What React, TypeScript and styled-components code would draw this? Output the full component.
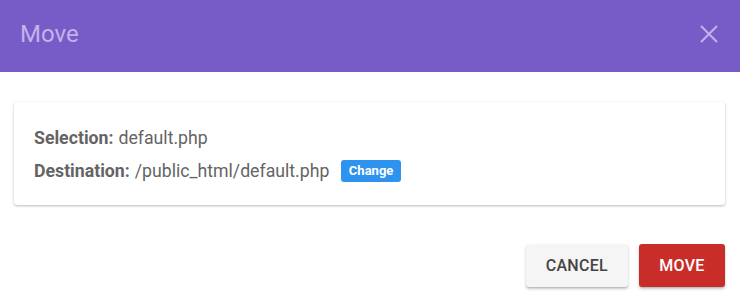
import React from "react";
import styled, { createGlobalStyle } from "styled-components";

const Global = createGlobalStyle`
  html, body { margin: 0; padding: 0; background: #ffffff; }
  body { font-family: Roboto, "Liberation Sans", Arial, sans-serif; }
  * { box-sizing: border-box; }
`;

const Dialog = styled.div`
  width: 740px;
  height: 305px;
  display: flex;
  flex-direction: column;
  background: #ffffff;
  overflow: hidden;
`;

const Header = styled.header`
  height: 72px;
  flex: none;
  display: flex;
  align-items: center;
  justify-content: space-between;
  padding: 0 21px 0 20px;
  background: #775bc7;
`;

const Title = styled.h1`
  margin: 0;
  font-size: 24px;
  font-weight: 400;
  line-height: 28px;
  color: #c2b3ea;
  padding-bottom: 4px;
`;

const CloseButton = styled.button`
  border: 0;
  background: transparent;
  padding: 0;
  width: 20px;
  height: 20px;
  display: flex;
  align-items: center;
  justify-content: center;
  cursor: pointer;
  margin-bottom: 4px;
`;

const Body = styled.div`
  flex: 1;
  display: flex;
  flex-direction: column;
  padding: 30px 15px 0 14px;
`;

const Card = styled.div`
  background: #ffffff;
  border-radius: 3px;
  box-shadow: 0 1px 3px rgba(0, 0, 0, 0.18), 0 1px 2px rgba(0, 0, 0, 0.1);
  padding: 19px 20px 18px;
  display: flex;
  flex-direction: column;
`;

const Row = styled.div`
  height: 33px;
  display: flex;
  align-items: center;
  font-size: 17.7px;
  color: #646464;
`;

const Label = styled.strong`
  font-weight: 700;
  margin-right: 5px;
`;

const Badge = styled.span`
  margin-left: 12px;
  height: 22px;
  padding: 0 7.5px;
  display: inline-flex;
  align-items: center;
  border-radius: 3px;
  background: #2d93ee;
  color: #ffffff;
  font-size: 13px;
  font-weight: 700;
`;

const Actions = styled.div`
  display: flex;
  justify-content: flex-end;
  gap: 11px;
  margin-top: 39px;
`;

const Button = styled.button<{ $variant: "default" | "danger" }>`
  height: 43px;
  border: 0;
  border-radius: 3px;
  padding: 0 ${(p) => (p.$variant === "danger" ? "18px" : "20px")};
  min-width: ${(p) => (p.$variant === "danger" ? "86px" : "102px")};
  font-family: Roboto, "Liberation Sans", Arial, sans-serif;
  font-size: 16px;
  font-weight: 500;
  letter-spacing: 0.3px;
  text-transform: uppercase;
  background: ${(p) => (p.$variant === "danger" ? "#c92d2a" : "#f5f5f5")};
  color: ${(p) => (p.$variant === "danger" ? "#ffffff" : "#444444")};
  box-shadow: 0 2px 3px rgba(0, 0, 0, 0.22), 0 1px 1px rgba(0, 0, 0, 0.08);
  cursor: pointer;
`;

export default function App() {
  return (
    <>
      <Global />
      <Dialog>
        <Header>
          <Title>Move</Title>
          <CloseButton aria-label="close">
            <svg width="18" height="18" viewBox="0 0 18 18">
              <path
                d="M1 1 L17 17 M17 1 L1 17"
                stroke="#c2b3ea"
                strokeWidth="2"
                fill="none"
              />
            </svg>
          </CloseButton>
        </Header>
        <Body>
          <Card>
            <Row>
              <Label>Selection:</Label> default.php
            </Row>
            <Row>
              <Label>Destination:</Label> /public_html/default.php
              <Badge>Change</Badge>
            </Row>
          </Card>
          <Actions>
            <Button $variant="default">Cancel</Button>
            <Button $variant="danger">Move</Button>
          </Actions>
        </Body>
      </Dialog>
    </>
  );
}
